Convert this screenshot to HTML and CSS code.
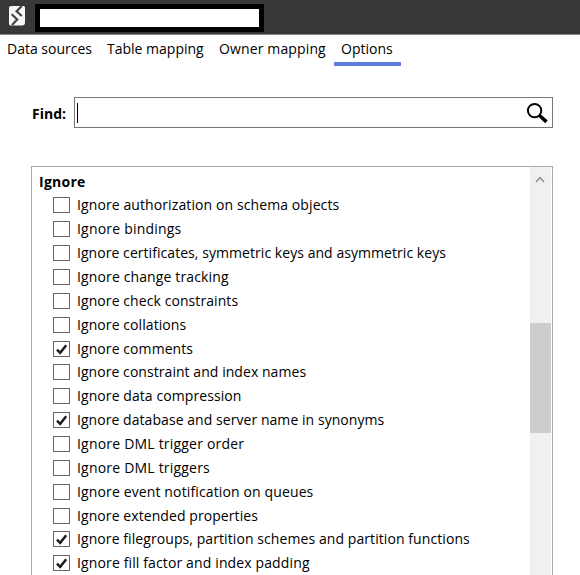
FILE: index.html
```html
<!DOCTYPE html>
<html lang="en">
<head>
<meta charset="utf-8">
<title>Project options</title>
<link rel="stylesheet" href="styles.css">
</head>
<body>
<header class="titlebar">
  <svg class="logo" width="16" height="21" viewBox="0 0 16 21"><path d="M3 1H14.500Q16 1 16 2.500V18Q16 20 13.500 20.500H1.500Q0 20.500 0 18.500V2.500Q0 1 3 1Z" fill="#f7f7f7"/><path d="M12.800 1L7.600 6.200L12.800 11M2.700 9.300L8.200 14.500L3 20" fill="none" stroke="#444" stroke-width="2.200"/></svg>
  <div class="title-box"></div>
</header>
<nav class="tabs">
  <a class="tab t1">Data sources</a>
  <a class="tab t2">Table mapping</a>
  <a class="tab t3">Owner mapping</a>
  <a class="tab t4 active">Options</a>
</nav>
<main class="content">
  <div class="find">
    <label class="find-label">Find:</label>
    <div class="find-box">
      <span class="caret"></span>
      <svg width="22" height="22" viewBox="0 0 22 22"><circle cx="8.600" cy="8.600" r="6.700" fill="none" stroke="#000" stroke-width="2"/><path d="M13 13L20.500 19.800" stroke="#000" stroke-width="3.600"/></svg>
    </div>
  </div>
  <section class="panel">
    <div class="list">
      <h2 class="group">Ignore</h2>
      <div class="row"><span class="check"></span><span class="r1">Ignore authorization on schema objects</span></div>
      <div class="row"><span class="check"></span><span class="r2">Ignore bindings</span></div>
      <div class="row"><span class="check"></span><span class="r3">Ignore certificates, symmetric keys and asymmetric keys</span></div>
      <div class="row"><span class="check"></span><span class="r4">Ignore change tracking</span></div>
      <div class="row"><span class="check"></span><span class="r5">Ignore check constraints</span></div>
      <div class="row"><span class="check"></span><span class="r6">Ignore collations</span></div>
      <div class="row"><span class="check"><svg viewBox="0 0 15 14"><path d="M3 7.600L6.200 10.800L12.200 3.200"/></svg></span><span class="r7">Ignore comments</span></div>
      <div class="row"><span class="check"></span><span class="r8">Ignore constraint and index names</span></div>
      <div class="row"><span class="check"></span><span class="r9">Ignore data compression</span></div>
      <div class="row"><span class="check"><svg viewBox="0 0 15 14"><path d="M3 7.600L6.200 10.800L12.200 3.200"/></svg></span><span class="r10">Ignore database and server name in synonyms</span></div>
      <div class="row"><span class="check"></span><span class="r11">Ignore DML trigger order</span></div>
      <div class="row"><span class="check"></span><span class="r12">Ignore DML triggers</span></div>
      <div class="row"><span class="check"></span><span class="r13">Ignore event notification on queues</span></div>
      <div class="row"><span class="check"></span><span class="r14">Ignore extended properties</span></div>
      <div class="row"><span class="check"><svg viewBox="0 0 15 14"><path d="M3 7.600L6.200 10.800L12.200 3.200"/></svg></span><span class="r15">Ignore filegroups, partition schemes and partition functions</span></div>
      <div class="row"><span class="check"><svg viewBox="0 0 15 14"><path d="M3 7.600L6.200 10.800L12.200 3.200"/></svg></span><span class="r16">Ignore fill factor and index padding</span></div>
    </div>
    <div class="scrollbar">
      <svg width="21" height="24" viewBox="0 0 21 24"><path d="M6 15L10 10.500L14 15" fill="none" stroke="#8a8a8a" stroke-width="1.400"/></svg>
      <div class="thumb"></div>
    </div>
  </section>
</main>
</body>
</html>
```
FILE: styles.css
```css
* { box-sizing: border-box; }
body {
  margin: 0;
  height: 575px;
  overflow: hidden;
  background: #fff;
  color: #000;
  font: 14px/20px "Open Sans", sans-serif;
  white-space: nowrap;
}
.titlebar {
  display: flex;
  height: 35px;
  padding: 4px 0 0 9px;
  background: #383838;
  border-bottom: 1px solid #858585;
}
.logo { margin-top: 1px; }
.title-box {
  width: 229px;
  height: 28px;
  margin-left: 10px;
  background: #fff;
  border: 5px solid #000;
}
.tabs { display: flex; height: 31px; }
.tab {
  height: 31px;
  padding: 4px 7px 0;
}
.t1 { width: 100px; }
.t2 { width: 112px; }
.t3 { width: 122px; letter-spacing: .13px; }
.t4 { width: 67px; }
.active { border-bottom: 4px solid #5f7fde; }
.content { padding: 31px 27px 0 31px; }
.find { display: flex; align-items: center; }
.find-label { width: 43px; font-weight: 700; padding: 2px 0 0 1px; }
.find-box {
  display: flex;
  flex: 1;
  justify-content: space-between;
  height: 31px;
  padding: 4px 4px 0 2px;
  border: 1px solid #777;
}
.caret { width: 1px; height: 20px; margin-top: 1px; background: #000; }
.panel {
  display: flex;
  height: 420px;
  margin-top: 38px;
  border: 1px solid #a8a8a8;
  border-bottom: 0;
}
.list { flex: 1; }
.group { margin: 5px 0 0 7px; font: 700 14px/20px "Open Sans", sans-serif; letter-spacing: .25px; }
.row {
  display: flex;
  align-items: center;
  gap: 7px;
  height: 23.87px;
  padding-left: 21px;
  letter-spacing: .08px;
}
.group + .row { margin-top: 1.5px; }
.r1 { letter-spacing: .1px; }
.r2, .r11, .r12 { letter-spacing: .2px; }
.r3, .r8, .r10 { letter-spacing: .055px; }
.r4, .r13, .r16 { letter-spacing: .13px; }
.check { width: 17px; height: 16px; border: 1px solid #666; }
.check svg { display: block; width: 15px; height: 14px; }
.check path { fill: none; stroke: #1c1c1c; stroke-width: 2.5; }
.scrollbar { width: 22px; background: #f0f0f0; border-right: 1px solid #fff; }
.scrollbar svg { display: block; }
.thumb { height: 110px; margin-top: 132px; background: #cdcdcd; }
```
